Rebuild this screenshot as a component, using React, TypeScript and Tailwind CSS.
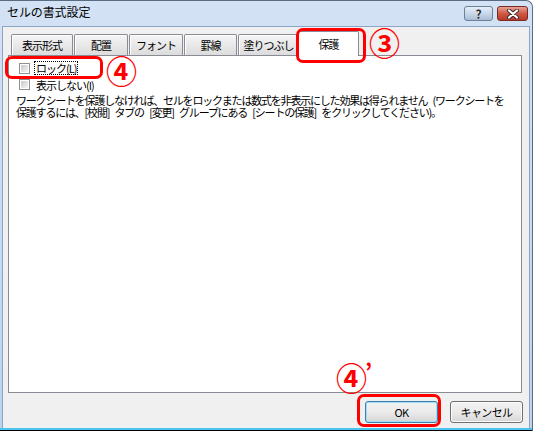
import React from "react";

const tabs = [
  { label: "表示形式", w: "w-[62px]" },
  { label: "配置", w: "w-[54px]" },
  { label: "フォント", w: "w-[54px]" },
  { label: "罫線", w: "w-[53px]" },
  { label: "塗りつぶし", w: "w-[61px]" },
];

function Checkbox() {
  return (
    <div className="w-[11px] h-[11px] border border-[#8e8f8f] bg-white p-[1px]">
      <div className="w-full h-full bg-gradient-to-br from-[#c9c9c9] to-[#f4f4f4]" />
    </div>
  );
}

function Btn({ label, primary }: { label: string; primary?: boolean }) {
  return (
    <div
      className={
        "w-[73px] h-[22px] rounded-[3px] border flex items-center justify-center text-[11px] tracking-[-0.6px] text-black bg-gradient-to-b from-[#f2f2f2] via-[#ebebeb] to-[#d6d6d6] " +
        (primary ? "border-[#3c7fb1] shadow-[inset_0_0_0_1px_#9fdcf5]" : "border-[#707070] shadow-[inset_0_0_0_1px_#fcfcfc]")
      }
    >
      {label}
    </div>
  );
}

export default function App() {
  return (
    <div className="relative w-[533px] h-[431px] overflow-hidden flex flex-col bg-gradient-to-b from-[#d3e2f4] to-[#bcd3ee] rounded-tr-[7px] border-t border-r border-[#5b6b82] font-['Noto_Sans_CJK_JP',sans-serif] text-black">
      {/* TITLE BAR */}
      <div className="h-[25px] flex items-start pl-[7px] pr-[4px] shrink-0">
        <div className="mt-[3px] text-[12px] leading-[16px] tracking-[-0.1px]">セルの書式設定</div>
        <div className="ml-auto mt-[5px] flex gap-[4px]">
          <div className="w-[29px] h-[15px] rounded-[3px] border border-[#6e7f98] bg-gradient-to-b from-[#e6eef8] via-[#c9d7ea] to-[#a9bcd6] flex items-center justify-center text-[12px] font-bold leading-none text-[#2a2a2a] [text-shadow:0_0_1px_#fff]">
            ?
          </div>
          <div className="w-[31px] h-[15px] rounded-[3px] border border-[#7a2a22] bg-gradient-to-b from-[#e8a293] via-[#cf5a46] to-[#b93a26] flex items-center justify-center">
            <svg width="14" height="10" viewBox="0 0 14 10">
              <path d="M3 1.5 L11 8.5 M11 1.5 L3 8.5" stroke="#3a2a2a" strokeWidth="4" strokeLinecap="round" />
              <path d="M3 1.5 L11 8.5 M11 1.5 L3 8.5" stroke="#fff" strokeWidth="2.2" strokeLinecap="round" />
            </svg>
          </div>
        </div>
      </div>

      {/* CLIENT AREA */}
      <div className="flex-1 mx-[2px] border border-b-0 border-[#8aa5c8] bg-[#f0f0f0] flex flex-col">
        {/* TABS */}
        <div className="h-[28px] flex items-end pl-[8px] shrink-0">
          {tabs.map((t) => (
            <div
              key={t.label}
              className={
                t.w +
                " h-[21px] mr-[1px] border border-b-0 border-[#898c95] rounded-t-[2px] bg-gradient-to-b from-[#f5f5f5] to-[#dcdcdc] flex items-center justify-center text-[11px] tracking-[-1px] shadow-[inset_1px_1px_0_#fff]"
              }
            >
              {t.label}
            </div>
          ))}
          <div className="w-[61px] h-[25px] -ml-[2px] -mb-[1px] relative z-10 border border-b-0 border-[#898c95] rounded-t-[2px] bg-white flex items-center justify-center text-[11px] tracking-[-1px]">
            保護
          </div>
        </div>

        {/* PANEL */}
        <div className="ml-[5px] w-[514px] h-[338px] border border-[#898c95] bg-white pt-[4px] pl-[10px] shrink-0">
          <div className="h-[16px] flex items-center gap-[4px]">
            <Checkbox />
            <span className="border border-dotted border-black px-[1px] text-[11px] leading-[12px] tracking-[-1px]">ロック(L)</span>
          </div>
          <div className="h-[17px] flex items-center gap-[4px]">
            <Checkbox />
            <span className="px-[2px] text-[11px] leading-[12px] tracking-[-1px]">表示しない(I)</span>
          </div>
          <div className="-ml-[3px] mt-[1px] text-[11px] leading-[12px] tracking-[-1.2px] [word-spacing:4px] whitespace-nowrap">
            <div>ワークシートを保護しなければ、セルをロックまたは数式を非表示にした効果は得られません (ワークシートを</div>
            <div>保護するには、[校閲] タブの [変更] グループにある [シートの保護] をクリックしてください)。</div>
          </div>
        </div>

        {/* BUTTONS */}
        <div className="flex justify-end gap-[12px] pr-[6px] pt-[8px]">
          <Btn label="OK" primary />
          <Btn label="キャンセル" />
        </div>
      </div>
      <div className="h-[2px] mx-0 bg-[#4cc3ee] shrink-0" />
      <div className="h-[1px] bg-black shrink-0" />

      {/* ANNOTATIONS */}
      <div className="absolute left-[296px] top-[27px] w-[70px] h-[35px] border-[3px] border-[#f00] rounded-[7px] z-20" />
      <div className="absolute left-[369px] top-[27px] text-[31px] leading-[28px] font-bold text-[#f00] z-20">③</div>
      <div className="absolute left-[5px] top-[55px] w-[98px] h-[23px] border-[3px] border-[#f00] rounded-[7px] z-20" />
      <div className="absolute left-[106px] top-[55px] text-[31px] leading-[28px] font-bold text-[#f00] z-20">④</div>
      <div className="absolute left-[336px] top-[362px] text-[31px] leading-[28px] font-bold text-[#f00] z-20 flex">
        <span>④</span>
        <span className="-ml-[2px] -mt-[4px] text-[22px] leading-[22px] font-bold">’</span>
      </div>
      <div className="absolute left-[357px] top-[393px] w-[84px] h-[33px] border-[3px] border-[#f00] rounded-[7px] z-20" />
    </div>
  );
}
